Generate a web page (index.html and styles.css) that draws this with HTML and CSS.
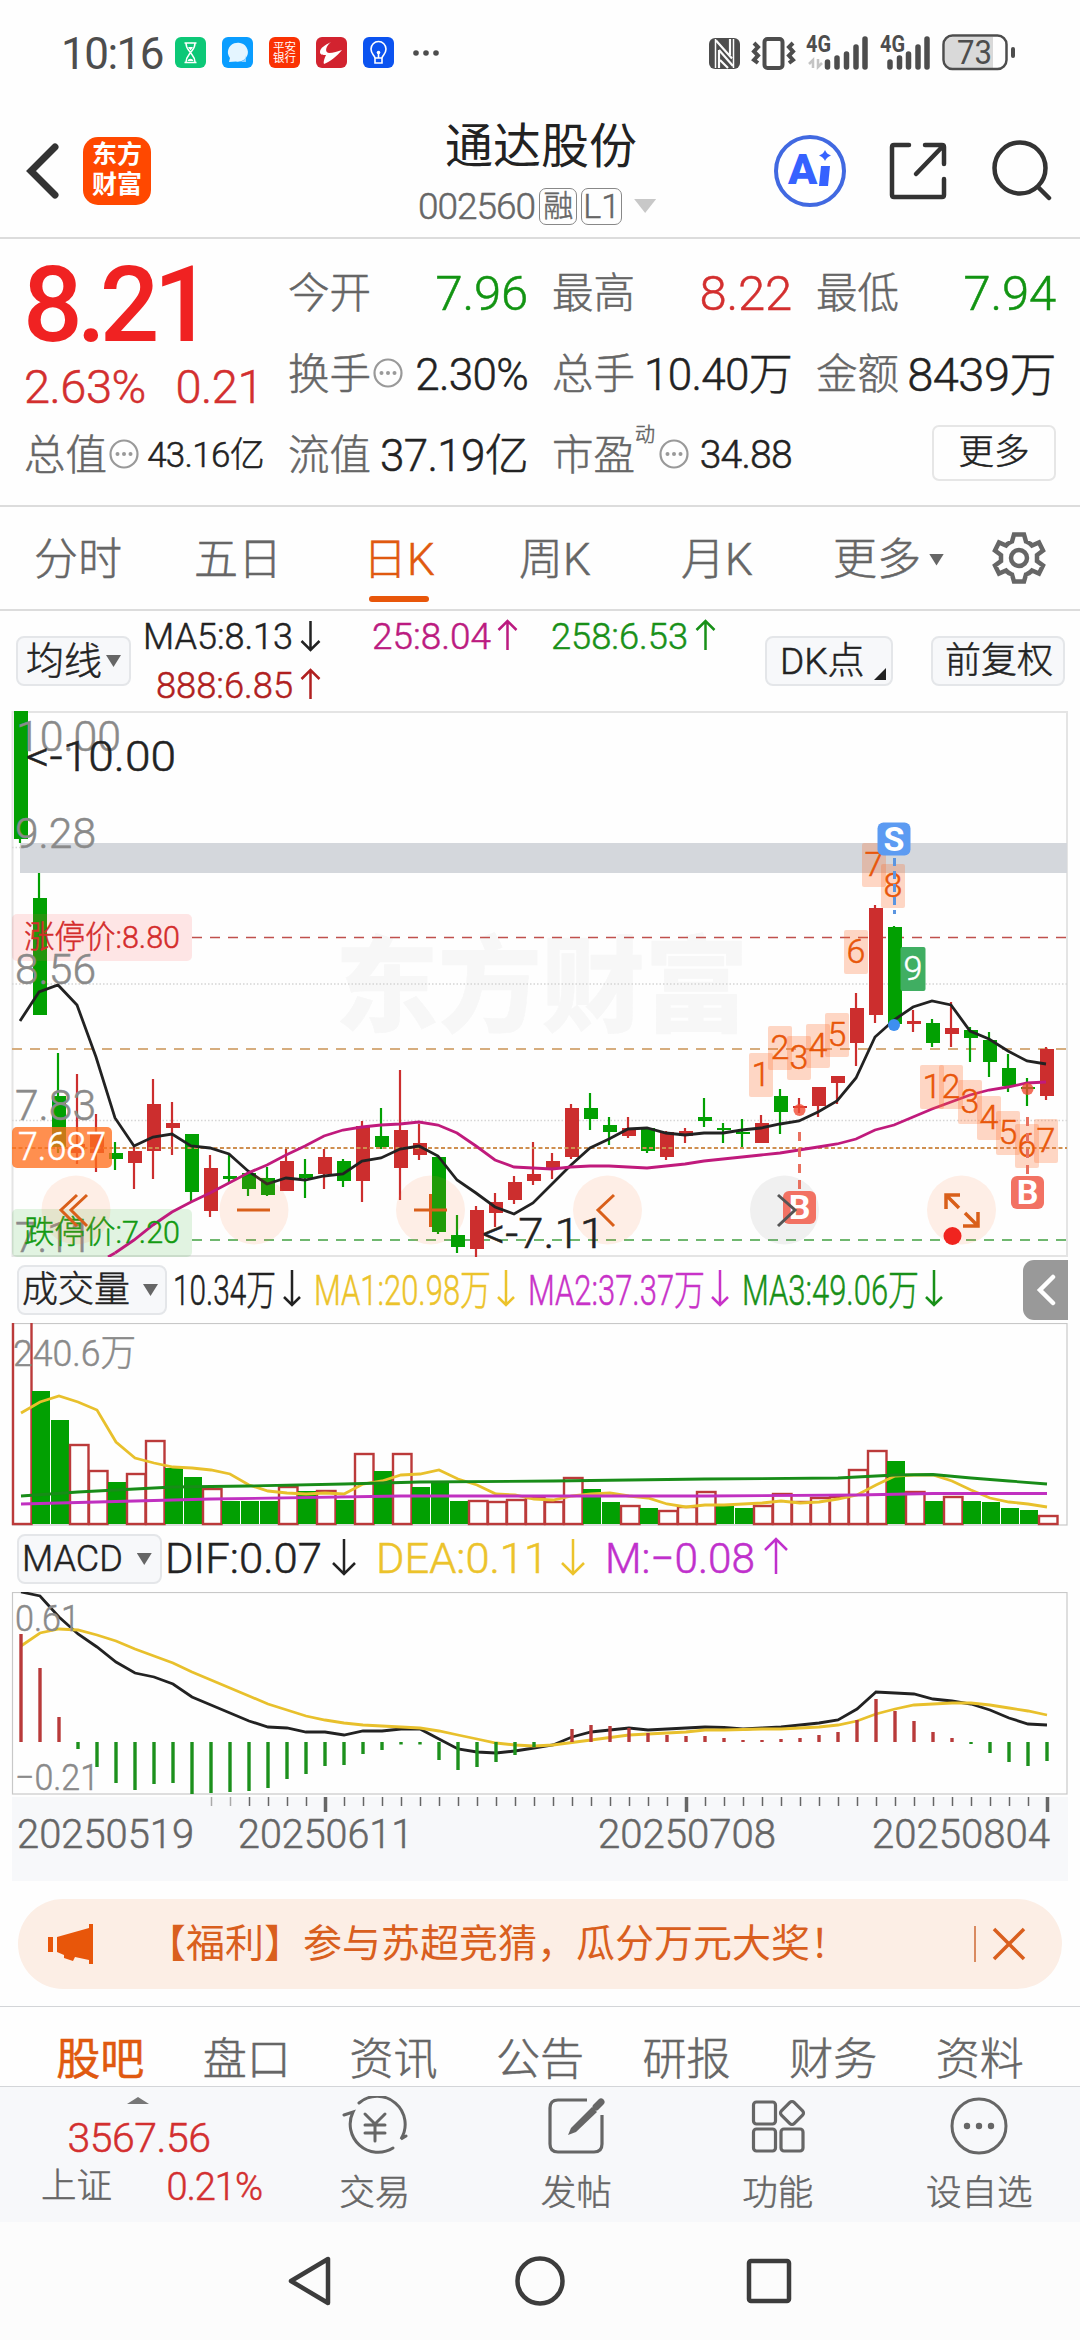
FILE: index.html
```html
<!DOCTYPE html>
<html lang="zh-CN">

<head>
    <meta charset="UTF-8">
    <meta name="viewport" content="width=device-width, initial-scale=1.0">
    <title>通达股份 002560</title>
    <link rel="stylesheet" href="styles.css">
</head>

<body>
    <div class="status-bar">
        <span class="clock">10:16</span>
        <div class="app-icons">
            <svg width="31" height="31" viewBox="0 0 31 31"><rect width="31" height="31" rx="6" fill="#0cc877"/><path d="M9.500 6h12M9.500 25.500h12M11 6c0 6 3 7 4.500 9.500C14 18 11 20 11 25M20 6c0 6-3 7-4.500 9.500C17 18 20 20 20 25" fill="none" stroke="#fff" stroke-width="1.500"/><path d="M15.500 13.500l-2.500-3.500h5zM12.500 24c1-3 5-3 6 0z" fill="#fff"/></svg>
            <svg width="31" height="31" viewBox="0 0 31 31"><rect width="31" height="31" rx="6" fill="#0a9dff"/><path d="M7 25l1-4A10 9.500 0 1 1 14 24.500z" fill="#e4f5ff"/><path d="M17 25a7 7 0 0 0 7-7v7z" fill="#8fd0ff"/></svg>
            <svg width="31" height="31" viewBox="0 0 31 31"><rect width="31" height="31" rx="6" fill="#fa3203"/><g class="tiny-logo" fill="#fff"><text x="4" y="13.500" textLength="23" lengthAdjust="spacingAndGlyphs">平安</text><text x="4" y="24.500" textLength="23" lengthAdjust="spacingAndGlyphs">银行</text></g></svg>
            <svg width="31" height="31" viewBox="0 0 31 31"><rect width="31" height="31" rx="6" fill="#d2232f"/><path d="M15 5c-6 3-11 6-11 10 0 3 3 3 6 3-1 2-3 7-2 9 6-2 13-8 18-14-4 1-9 3-13 3-5-1-3-7 2-11z" fill="#fff"/></svg>
            <svg width="31" height="31" viewBox="0 0 31 31"><rect width="31" height="31" rx="6" fill="#0b53f0"/><path d="M12 21c-.5-3-4-4-4-9a7.500 7.500 0 0 1 15 0c0 5-3.500 6-4 9zM12 21v5h7v-5M15.500 16v5" fill="none" stroke="#fff" stroke-width="1.600"/><circle cx="15.500" cy="15.500" r="1.800" fill="#fff"/></svg>
        </div>
        <svg class="dots" width="26" height="6" viewBox="0 0 26 6" fill="#4d4d4d"><circle cx="3" cy="3" r="2.800"/><circle cx="13" cy="3" r="2.800"/><circle cx="23" cy="3" r="2.800"/></svg>
        <svg class="system-icons" width="310" height="50" viewBox="708 27 310 50">
            <rect x="709" y="37" width="31" height="31" rx="6" fill="#4d4d4d"/>
            <path d="M715.500 38v29M733.500 38v29" stroke="#fcfcfc" stroke-width="1.500"/>
            <path d="M716 39.500l16 18M719 49v18M730 38v16M719 49l14 16M720 59l8 8" stroke="#fcfcfc" stroke-width="2.200" fill="none"/>
            <rect x="764.500" y="38" width="18" height="29" rx="3" fill="none" stroke="#4d4d4d" stroke-width="4"/>
            <path d="M754 42l4 4-4 4.500 4 4-4 4.500 4 3M793 42l-4 4 4 4.500-4 4 4 4.500-4 3" fill="none" stroke="#4d4d4d" stroke-width="4"/>
            <g fill="#4d4d4d" class="net"><text x="806" y="51" textLength="25" lengthAdjust="spacingAndGlyphs">4G</text><text x="880" y="51" textLength="25" lengthAdjust="spacingAndGlyphs">4G</text></g>
            <path d="M813 67v-8l-4 4M818 58v8l4-4" fill="none" stroke="#c4c4c4" stroke-width="2.500"/>
            <path d="M827.500 61v5M837 57v9M846.500 53v13M856 46v20M865 38v28M890 61v5M899.500 57v9M908.500 53v13M918 46v20M927 38v28" stroke="#4d4d4d" stroke-width="5.500" stroke-linecap="round"/>
            <path d="M953 36h40v31h-40q-8 0-8-8v-15q0-8 8-8z" fill="#d9d9d9"/>
            <rect x="943.500" y="34.500" width="63" height="33.500" rx="9" fill="none" stroke="#4d4d4d" stroke-width="2.500"/>
            <path d="M1013 48v7" stroke="#4d4d4d" stroke-width="4" stroke-linecap="round"/>
            <text class="battery" x="957" y="63" textLength="35" lengthAdjust="spacingAndGlyphs" fill="#4d4d4d">73</text>
        </svg>
    </div>

    <div class="header">
        <div class="header-left">
            <svg width="34" height="58" viewBox="0 0 34 58"><path d="M29 5L5 29l24 24" fill="none" stroke="#333" stroke-width="7" stroke-linecap="round"/></svg>
            <div class="brand">东方<br>财富</div>
        </div>
        <div class="title">
            <div class="name">通达股份</div>
            <div class="code"><span>002560</span><i>融</i><i class="wide">L1</i><b class="tri"></b></div>
        </div>
        <div class="header-right">
            <svg width="72" height="72" viewBox="0 0 72 72"><circle cx="36" cy="36" r="34" fill="#fff" stroke="#4169e1" stroke-width="4"/><text class="ai" x="14" y="49" fill="#3662ff">A</text><path d="M47 31h9l-2 20h-9z" fill="#3662ff"/><path d="M51 15q1.500 4 6 5.500-4.500 1.500-6 5.500-1.500-4-6-5.500 4.500-1.500 6-5.500z" fill="#3662ff"/></svg>
            <svg width="60" height="60" viewBox="0 0 60 60"><path d="M21 4H6q-2 0-2 2v48q0 2 2 2h48q2 0 2-2V38M37 4h17q2 0 2 2v17M55 5L28 33" fill="none" stroke="#333" stroke-width="4.500" stroke-linecap="round"/></svg>
            <svg width="62" height="62" viewBox="0 0 62 62"><circle cx="30" cy="28" r="25.500" fill="none" stroke="#333" stroke-width="4.500"/><path d="M48 47l11 11" stroke="#333" stroke-width="4.500" stroke-linecap="round"/></svg>
        </div>
    </div>

    <div class="quote">
        <div class="price">
            <div class="last">8.21</div>
            <div class="change"><span>2.63%</span><span>0.21</span></div>
        </div>
        <div class="cell"><label>今开</label><span class="big green">7.96</span></div>
        <div class="cell"><label>最高</label><span class="big red">8.22</span></div>
        <div class="cell"><label>最低</label><span class="big green">7.94</span></div>
        <div class="cell"><label>换手</label><svg class="tip" viewBox="0 0 30 30"><use href="#tip"/></svg><span>2.30%</span></div>
        <div class="cell"><label>总手</label><span>10.40万</span></div>
        <div class="cell"><label>金额</label><span class="wide">8439万</span></div>
        <div class="cell"><label>总值</label><svg class="tip" viewBox="0 0 30 30"><use href="#tip"/></svg><span class="small">43.16亿</span></div>
        <div class="cell"><label>流值</label><span>37.19亿</span></div>
        <div class="cell"><label>市盈<sup>动</sup></label><svg class="tip" viewBox="0 0 30 30"><use href="#tip"/></svg><span class="mid">34.88</span></div>
        <div class="cell end"><button class="more">更多</button></div>
        <svg width="0" height="0" class="defs"><defs><g id="tip"><circle cx="15" cy="15" r="13.500" fill="none" stroke="#999" stroke-width="2.200"/><circle cx="8.500" cy="15" r="2" fill="#999"/><circle cx="15" cy="15" r="2" fill="#999"/><circle cx="21.500" cy="15" r="2" fill="#999"/></g></defs></svg>
    </div>

    <div class="period-tabs">
        <span>分时</span>
        <span>五日</span>
        <span class="active">日K</span>
        <span>周K</span>
        <span>月K</span>
        <span>更多<b class="tri dark"></b></span>
        <svg width="54" height="54" viewBox="-27 -27 54 54" fill="none" stroke="#666" stroke-width="4.500"><path d="M-5-23.500H5L7-16.500Q11-15 13-12.500L20-15.500 24-7.500 18-3V3L24 7.500 20 15.500 13 12.500Q11 15 7 16.500L5 23.500H-5L-7 16.500Q-11 15-13 12.500L-20 15.500-24 7.500-18 3V-3L-24-7.500-20-15.500-13-12.500Q-11-15-7-16.500Z"/><circle r="8"/></svg>
    </div>

    <div class="ma-row">
        <button class="pill ma">均线<b class="tri dark"></b></button>
        <svg class="ma-legend" width="620" height="100" viewBox="131 611 620 100" id="ma-legend"></svg>
        <button class="pill dk">DK点<b class="corner"></b></button>
        <button class="pill fq">前复权</button>
    </div>

    <svg id="kline" width="1080" height="546" viewBox="0 711 1080 546"></svg>

    <div class="legend-row vol">
        <button class="pill">成交量<b class="tri dark"></b></button>
        <svg id="vol-legend" width="800" height="66" viewBox="167 1257 800 66"></svg>
        <div class="collapse"><svg width="20" height="32" viewBox="0 0 20 32"><path d="M17 3L4 16l13 13" fill="none" stroke="#fff" stroke-width="4.500" stroke-linecap="round"/></svg></div>
    </div>
    <svg id="volume" width="1080" height="203" viewBox="0 1323 1080 203"></svg>

    <div class="legend-row">
        <button class="pill macd">MACD<b class="tri dark"></b></button>
        <svg id="macd-legend" width="800" height="66" viewBox="162 1526 800 66"></svg>
    </div>
    <svg id="macd" width="1080" height="203" viewBox="0 1592 1080 203"></svg>
    <svg id="dates" width="1080" height="86" viewBox="0 1795 1080 86"></svg>

    <div class="banner">
        <svg width="46" height="40" viewBox="0 0 46 40" fill="#e8560a"><path d="M0 13h5v15H0zM9 13L41 4V0h4v40h-4v-4l-14-3-2 4-9-3v-3l-7-3z"/></svg>
        <span>【福利】参与苏超竞猜，瓜分万元大奖！</span>
        <i></i>
        <svg width="34" height="34" viewBox="0 0 34 34"><path d="M2 2l30 30M32 2L2 32" stroke="#d95f1e" stroke-width="3.500"/></svg>
    </div>

    <div class="info-tabs">
        <span class="active">股吧</span><span>盘口</span><span>资讯</span><span>公告</span><span>研报</span><span>财务</span><span>资料</span>
    </div>

    <div class="toolbar">
        <div class="index">
            <b class="up"></b>
            <div class="index-value">3567.56</div>
            <div class="index-name"><span>上证</span><em>0.21%</em></div>
        </div>
        <div class="tool"><svg width="66" height="60" viewBox="-33 -30 66 60" fill="none" stroke="#666" stroke-width="3" stroke-linecap="round"><path d="M-16-23A28 28 0 0 1 26 13l5-3M18 22A28 28 0 0 1-22-14l-9 3"/><path d="M-10-12L0-2 10-12M0-2V15M-10-1H10M-10 7H10"/></svg>交易</div>
        <div class="tool"><svg width="60" height="60" viewBox="-30 -30 60 60" fill="none" stroke="#666" stroke-width="3.200"><path d="M11-26h-29q-8 0-8 8v36q0 8 8 8h36q8 0 8-8v-29"/><path d="M-8 9l3-7L16-19l5 5L0 6z" fill="#666" stroke="none"/><path d="M20-19l5-5" stroke-width="7" stroke-linecap="round"/></svg>发帖</div>
        <div class="tool"><svg width="60" height="60" viewBox="-30 -30 60 60" fill="none" stroke="#666" stroke-width="3.200"><rect x="-24.500" y="-24" width="22" height="22" rx="3"/><rect x="-24.500" y="3" width="22" height="22" rx="3"/><rect x="3" y="3" width="22" height="22" rx="3"/><rect x="5" y="-22" width="18" height="18" rx="3" transform="rotate(45 14 -13)"/></svg>功能</div>
        <div class="tool"><svg width="60" height="60" viewBox="-30 -30 60 60" fill="none" stroke="#666" stroke-width="3"><circle r="27"/><g fill="#666" stroke="none"><circle cx="-12" r="3.200"/><circle r="3.200"/><circle cx="12" r="3.200"/></g></svg>设自选</div>
    </div>

    <div class="nav-bar">
        <svg width="50" height="54" viewBox="0 0 50 54"><path d="M42 5v44L5 27z" fill="none" stroke="#3c3c3c" stroke-width="4.500" stroke-linejoin="round"/></svg>
        <svg width="50" height="54" viewBox="0 0 50 54"><circle cx="25" cy="27" r="22.500" fill="none" stroke="#3c3c3c" stroke-width="4.500"/></svg>
        <svg width="50" height="54" viewBox="0 0 50 54"><rect x="5" y="7" width="40" height="40" rx="2" fill="none" stroke="#3c3c3c" stroke-width="4.500"/></svg>
    </div>

    <script>
        const RED = '#cc2e2e';
        const GREEN = '#02a002';
        const STEP = 19;

        // color, high, body top, body bottom, low
        const candles = [
            ['g', 711, 711, 839, 843], ['g', 873, 898, 1015, 1015], ['g', 1053, 1096, 1147, 1153], ['r', 1074, 1144, 1153, 1164],
            ['r', 1114, 1132, 1153, 1172], ['g', 1142, 1153, 1159, 1170], ['r', 1147, 1151, 1163, 1189], ['r', 1079, 1104, 1151, 1179],
            ['r', 1102, 1123, 1128, 1155], ['g', 1134, 1134, 1192, 1201], ['r', 1155, 1168, 1211, 1217], ['g', 1153, 1176, 1179, 1184],
            ['g', 1173, 1173, 1189, 1196], ['g', 1167, 1178, 1195, 1196], ['r', 1149, 1161, 1191, 1191], ['g', 1159, 1174, 1178, 1198],
            ['r', 1149, 1157, 1174, 1189], ['g', 1159, 1161, 1181, 1187], ['r', 1121, 1126, 1181, 1202], ['g', 1108, 1136, 1147, 1149],
            ['r', 1070, 1130, 1168, 1200], ['r', 1124, 1143, 1155, 1160], ['g', 1157, 1157, 1232, 1234], ['g', 1215, 1235, 1247, 1253],
            ['r', 1206, 1210, 1249, 1257], ['r', 1193, 1202, 1213, 1227], ['r', 1176, 1182, 1200, 1204], ['r', 1142, 1174, 1181, 1185],
            ['r', 1153, 1161, 1168, 1179], ['r', 1104, 1108, 1157, 1159], ['g', 1093, 1108, 1119, 1130], ['g', 1117, 1125, 1132, 1145],
            ['r', 1117, 1128, 1136, 1138], ['g', 1127, 1128, 1151, 1153], ['r', 1131, 1132, 1157, 1160], ['r', 1128, 1131, 1136, 1143],
            ['g', 1098, 1117, 1121, 1127], ['g', 1123, 1128, 1130, 1143], ['g', 1119, 1132, 1134, 1147], ['r', 1115, 1123, 1143, 1143],
            ['g', 1089, 1096, 1112, 1134], ['r', 1098, 1106, 1108, 1113], ['r', 1087, 1087, 1106, 1117], ['r', 1076, 1076, 1083, 1104],
            ['r', 993, 1008, 1043, 1066], ['r', 905, 908, 1015, 1023], ['g', 926, 927, 1024, 1027], ['r', 1010, 1021, 1024, 1032],
            ['g', 1019, 1023, 1043, 1047], ['r', 1002, 1028, 1034, 1047], ['g', 1027, 1030, 1038, 1062], ['g', 1032, 1040, 1062, 1077],
            ['g', 1054, 1068, 1086, 1092], ['g', 1078, 1087, 1089, 1106], ['r', 1047, 1049, 1096, 1100]
        ];
        const ma5 = [1021, 992, 985, 1005, 1057, 1118, 1146, 1137, 1134, 1146, 1148, 1154, 1171, 1184, 1178, 1180, 1176, 1174, 1161, 1158, 1149, 1146, 1156, 1180, 1193, 1207, 1214, 1203, 1184, 1165, 1148, 1139, 1129, 1128, 1133, 1135, 1133, 1133, 1130, 1128, 1124, 1121, 1112, 1101, 1078, 1037, 1020, 1007, 1001, 1005, 1031, 1039, 1051, 1061, 1064];
        // starts at the 6th bar
        const ma25 = [1253, 1240, 1225, 1212, 1202, 1193, 1183, 1173, 1165, 1155, 1146, 1136, 1130, 1127, 1125, 1124, 1122, 1125, 1133, 1146, 1160, 1167, 1168, 1169, 1167, 1166, 1166, 1167, 1168, 1166, 1164, 1161, 1159, 1157, 1155, 1153, 1150, 1147, 1144, 1139, 1130, 1125, 1117, 1109, 1102, 1095, 1090, 1087, 1083, 1082];

        const volTop = [1318, 1391, 1420, 1445, 1471, 1482, 1474, 1441, 1468, 1477, 1489, 1501, 1501, 1501, 1487, 1491, 1491, 1500, 1454, 1471, 1454, 1487, 1482, 1501, 1501, 1502, 1500, 1498, 1502, 1478, 1489, 1502, 1506, 1508, 1511, 1507, 1492, 1506, 1508, 1506, 1494, 1502, 1498, 1497, 1470, 1451, 1461, 1492, 1501, 1497, 1501, 1502, 1508, 1510, 1516];
        const volColor = 'rggrrgrrggrgggrgrgrgrgggrrrrrrggrgrrrggrrrrrrrgrgrggggr';
        const volMa1 = [1413, 1402, 1396, 1402, 1410, 1442, 1458, 1463, 1467, 1468, 1470, 1474, 1485, 1491, 1493, 1494, 1493, 1494, 1484, 1481, 1475, 1474, 1470, 1479, 1485, 1494, 1495, 1499, 1500, 1496, 1494, 1493, 1496, 1498, 1504, 1507, 1505, 1505, 1504, 1503, 1501, 1503, 1502, 1499, 1495, 1485, 1476, 1475, 1475, 1481, 1490, 1498, 1502, 1504, 1507];
        const volMa2 = [[0, 1504], [6, 1501], [10, 1499], [20, 1496], [36, 1496], [44, 1495], [48, 1493.5], [54, 1493.5]];
        const volMa3 = [[0, 1496], [3, 1492], [8, 1487], [12, 1486], [17, 1484], [21, 1482], [28, 1481], [36, 1479], [43, 1478], [46, 1475], [48, 1474.5], [50, 1478], [52, 1481], [54, 1484]];

        const hist = [1634, 1668, 1717, 1749, 1767, 1783, 1790, 1784, 1783, 1794, 1793, 1792, 1791, 1788, 1779, 1774, 1766, 1765, 1754, 1750, 1744.5, 1744.5, 1760, 1770, 1767, 1762, 1755, 1747, 1742, 1729, 1725, 1726, 1728, 1733, 1735, 1736, 1736, 1738, 1740, 1740, 1739, 1738, 1735, 1732, 1720, 1699, 1711, 1721, 1732, 1738, 1744, 1753, 1762, 1766, 1761];
        const dif = [1592, 1596, 1617, 1634, 1647, 1662, 1673, 1677, 1684, 1697, 1705, 1713, 1721, 1727, 1728, 1732, 1732, 1735, 1731, 1731, 1729, 1729, 1739, 1749, 1752, 1753, 1751, 1748, 1745, 1737, 1732, 1730, 1728, 1730, 1729, 1728, 1727, 1727.5, 1729, 1728, 1727, 1725, 1723, 1720, 1709, 1692, 1693, 1694, 1699, 1701, 1704, 1710, 1718, 1724, 1725];
        const dea = [1646, 1633, 1629, 1630, 1635, 1641, 1649, 1656, 1663, 1672, 1680, 1688, 1696, 1704, 1710, 1716, 1720, 1723, 1725, 1726, 1727, 1728, 1731, 1735, 1739, 1743, 1745, 1746, 1745, 1742.5, 1740, 1737.5, 1735, 1734, 1733, 1732, 1730, 1730, 1729.5, 1729, 1729, 1728, 1727, 1725, 1721, 1714, 1709, 1705, 1704, 1703, 1703, 1705, 1708, 1711, 1715];

        function rect(x, y, w, h, fill, rest = '') {
            return `<rect x="${x}" y="${y}" width="${w}" height="${h}" fill="${fill}" ${rest}/>`;
        }

        function line(x1, y1, x2, y2, color, width = 2, dash = '') {
            return `<line x1="${x1}" y1="${y1}" x2="${x2}" y2="${y2}" stroke="${color}" stroke-width="${width}" stroke-dasharray="${dash}"/>`;
        }

        // text stretched to run from x to x2
        function text(str, x, x2, y, size, color, cls = '') {
            return `<text x="${x}" y="${y}" font-size="${size}" textLength="${x2 - x}" lengthAdjust="spacingAndGlyphs" fill="${color}" stroke="${color}" stroke-width="0.5" class="${cls}">${str}</text>`;
        }

        function arrow(x, top, bottom, up, color, wing = 9) {
            const tip = up ? top : bottom;
            const dy = up ? wing : -wing;
            return `<path d="M${x} ${top}V${bottom}M${x - wing} ${tip + dy}L${x} ${tip}L${x + wing} ${tip + dy}" fill="none" stroke="${color}" stroke-width="2.5"/>`;
        }

        function curve(points, x0, color, from = 0) {
            const pts = points.map((p, i) => Array.isArray(p) ? `${x0 + p[0] * STEP},${p[1]}` : `${x0 + (i + from) * STEP},${p}`);
            return `<polyline points="${pts.join(' ')}" fill="none" stroke="${color}" stroke-width="2.8"/>`;
        }

        function drawKline() {
            let s = '';
            s += text('东方财富', 335, 748, 1024, 104, '#f7f7f7', 'heavy');
            s += `<path d="M12.500 712H1067V1256H12.500Z" fill="none" stroke="#e4e4e4" stroke-width="2"/>`;
            [847.5, 984, 1120.5].forEach(y => s += line(12, y, 1067, y, '#d5d5d5', 1.5, '1.5 2'));
            s += line(192, 937.5, 1067, 937.5, '#c0504d', 1.6, '10 8');
            s += line(12, 1049, 1067, 1049, '#d6ad7e', 1.8, '10 8');
            s += line(192, 1240, 1067, 1240, '#6fb76f', 1.8, '10 8');
            candles.forEach(([c, high, top, bottom, low], i) => {
                const x = 20 + i * STEP;
                const color = c === 'r' ? RED : GREEN;
                s += line(x, high, x, low, color, 2.2);
                s += rect(x - 6, top, 14, bottom - top, color);
            });
            s += rect(20, 843, 1047, 30, '#d4d7dc');
            s += line(12, 1148, 1067, 1148, '#cf8f50', 1.8, '4 2.5');
            s += text('10.00', 16, 121, 751, 42, '#8a8a8a');
            s += text('9.28', 15, 96, 848, 42, '#8a8a8a');
            s += rect(12, 914, 180, 47, '#ff5050', 'fill-opacity="0.14" rx="5"');
            s += rect(12, 1209, 180, 48, '#30b030', 'fill-opacity="0.14" rx="5"');
            s += curve(ma5, 20, '#222');
            s += `<path d="M108 1257L115 1253" stroke="#c01a7c" stroke-width="2.8"/>` + curve(ma25, 20, '#c01a7c', 5);
            s += text('8.56', 15, 96, 984, 42, '#8a8a8a');
            s += text('7.83', 15, 96, 1120, 42, '#8a8a8a');
            s += text('7.11', 15, 92, 1252, 42, '#8a8a8a');
            s += text('涨停价:8.80', 24, 180, 948, 32, '#d42c2c');
            s += text('跌停价:7.20', 24, 180, 1243, 32, '#129a12');
            s += rect(12, 1127, 100, 41, '#ff6f1e', 'fill-opacity="0.78" rx="5"');
            s += text('7.687', 18, 106, 1160, 38, '#fff');

            [76, 254, 430.5, 607.5, 784.5, 961.5].forEach((x, i) => {
                s += `<circle cx="${x}" cy="1210" r="34.500" fill="${i === 4 ? '#888' : '#ff7d3c'}" fill-opacity="0.12"/>`;
            });
            s += `<g fill="none" stroke="#d95f1a" stroke-width="3">
                <path d="M77 1195L61 1210L77 1226M87 1195L71 1210L87 1226M237 1210H270M414 1210H447M430.500 1194V1227M614 1195L598 1210L614 1226"/>
                <path d="M946 1209V1195H960M946 1195L959 1208M978 1212V1226H963M978 1226L965 1213" stroke-width="3.500"/></g>`;
            s += `<circle cx="952.500" cy="1236" r="9" fill="#f0241f"/>`;
            s += text('&lt;-10.00', 26, 176, 771, 42, '#222');
            s += text('&lt;-7.11', 482, 605, 1248, 42, '#222');

            // nine-turn counts
            const counts = [[1, 749, 1053], [2, 768, 1026], [3, 787, 1036], [4, 806, 1024], [5, 825, 1013], [6, 844, 930], [7, 862, 843], [8, 881, 864],
                [1, 920, 1065], [2, 939, 1065], [3, 958, 1080], [4, 977, 1096], [5, 996, 1111], [6, 1015, 1124], [7, 1034, 1119]];
            counts.forEach(([n, x, y]) => {
                s += rect(x, y, 24, 44, '#ff6a28', 'fill-opacity="0.27" rx="2"');
                s += `<text x="${x + 12}" y="${y + 33}" font-size="34" text-anchor="middle" fill="#e8560a" stroke="#e8560a" stroke-width="0.5">${n}</text>`;
            });
            s += rect(900.5, 947, 25, 44, '#40ae62', 'rx="2"') + `<text x="913" y="980" font-size="34" text-anchor="middle" fill="#fff" stroke="#fff" stroke-width="0.5">9</text>`;

            // buy and sell points
            s += line(894.5, 858, 894.5, 914, '#5b95e0', 3, '8 5');
            s += rect(877.5, 822.5, 33, 33, '#5c9bf2', 'rx="6"') + `<text x="894" y="851" class="mark" text-anchor="middle">S</text>`;
            s += `<circle cx="894" cy="1025" r="6" fill="#3d8ff0"/>`;
            [[799.5, 1110, 1132, 1191], [1027.5, 1089, 1117, 1176]].forEach(([x, dot, top, box]) => {
                s += `<circle cx="${x}" cy="${dot}" r="6" fill="#f04a32" fill-opacity="0.8"/>`;
                s += line(x, top, x, box, '#e8705f', 3, '9 7');
                s += rect(x - 16.5, box, 33, 33, '#f27263', 'rx="6"') + `<text x="${x}" y="${box + 28}" class="mark" text-anchor="middle">B</text>`;
            });
            s += `<path d="M778 1195L795 1210L778 1226" fill="none" stroke="#555" stroke-width="3"/>`;
            document.getElementById('kline').innerHTML = s;
        }

        function drawVolume() {
            let s = `<rect x="12.500" y="1323.500" width="1054.500" height="201.500" fill="none" stroke="#c8c8c8" stroke-width="1.200"/>`;
            volTop.forEach((y, i) => {
                const x = 12 + i * STEP;
                if (volColor[i] === 'r') {
                    s += rect(x + 1, y, 18.5, 1524 - y, 'none', 'stroke="#bb3a3a" stroke-width="2.4"');
                } else {
                    s += rect(x + 1, y, 18, 1524 - y, GREEN);
                }
            });
            s += curve(volMa1, 21, '#e8c02c') + curve(volMa3, 21, '#188c18') + curve(volMa2, 21, '#c030c0');
            s += text('240.6万', 13, 136, 1366, 37, '#8a8a8a');
            document.getElementById('volume').innerHTML = s;
        }

        function drawMacd() {
            let s = `<rect x="12.500" y="1592.500" width="1054.500" height="201.500" fill="none" stroke="#c8c8c8" stroke-width="1.200"/>`;
            s += curve(dif, 21, '#222') + curve(dea, 21, '#e8c02c');
            hist.forEach((y, i) => {
                s += line(21 + i * STEP, 1742, 21 + i * STEP, y, y < 1742 ? '#b83a3a' : '#1c901c', 3.4);
            });
            s += text('0.61', 15, 80, 1631, 37, '#8a8a8a');
            s += text('−0.21', 15, 99, 1790, 37, '#8a8a8a');
            document.getElementById('macd').innerHTML = s;

            let d = rect(12, 1797, 1056, 84, '#f7f8fa');
            for (let i = 10; i < 55; i++) {
                const big = i === 16 || i === 35 || i === 54;
                d += line(21.5 + i * STEP, 1797, 21.5 + i * STEP, big ? 1812 : 1806, i < 12 ? '#aaa' : '#666', big ? 3.5 : 1.5);
            }
            [['20250519', 17, 194], ['20250611', 238, 413], ['20250708', 598, 776], ['20250804', 872, 1050]].forEach(([t, a, b]) => {
                d += text(t, a, b, 1848, 40, '#666');
            });
            document.getElementById('dates').innerHTML = d;
        }

        function drawLegends() {
            document.getElementById('ma-legend').innerHTML =
                text('MA5:8.13', 143, 293, 649, 36, '#222') + arrow(310.5, 621, 650, false, '#222') +
                text('25:8.04', 372, 491, 649, 36, '#bb1a80') + arrow(507.5, 621, 650, true, '#bb1a80') +
                text('258:6.53', 551, 688, 649, 36, '#189018') + arrow(705.5, 621, 650, true, '#189018') +
                text('888:6.85', 156, 293, 698, 36, '#b02020') + arrow(310.5, 670, 699, true, '#b02020');

            document.getElementById('vol-legend').innerHTML =
                text('10.34万', 173, 276, 1305, 42, '#222') + arrow(292, 1270, 1305, false, '#222', 8) +
                text('MA1:20.98万', 314, 491, 1305, 42, '#ecc32b') + arrow(506, 1270, 1305, false, '#ecc32b', 8) +
                text('MA2:37.37万', 528, 705, 1305, 42, '#c832c8') + arrow(720, 1270, 1305, false, '#c832c8', 8) +
                text('MA3:49.06万', 742, 919, 1305, 42, '#189018') + arrow(934, 1270, 1305, false, '#189018', 8);

            document.getElementById('macd-legend').innerHTML =
                text('DIF:0.07', 165, 322, 1573, 42, '#222') + arrow(344, 1539, 1574, false, '#222', 11) +
                text('DEA:0.11', 376, 548, 1573, 42, '#ecc32b') + arrow(573, 1539, 1574, false, '#ecc32b', 11) +
                text('M:−0.08', 605, 755, 1573, 42, '#c030cc') + arrow(776, 1539, 1574, true, '#c030cc', 11);
        }

        drawKline();
        drawVolume();
        drawMacd();
        drawLegends();
    </script>
</body>

</html>
```
FILE: styles.css
```css
* {
    box-sizing: border-box;
}

body {
    margin: 0;
    width: 1080px;
    height: 2340px;
    overflow: hidden;
    background: #fefefe;
    color: #222;
    font-family: Roboto, "Noto Sans CJK SC", sans-serif;
    font-weight: 300;
}

svg {
    display: block;
    flex: none;
}

button {
    font-family: inherit;
    font-weight: inherit;
    color: #222;
    padding: 0;
}

i,
em {
    font-style: normal;
}

/* a little more body for the light face */
.code,
.change,
.cell,
.period-tabs,
.pill,
.info-tabs,
.toolbar {
    -webkit-text-stroke: 0.500px currentColor;
}

.red {
    color: #d32f2f;
}

.green {
    color: #129412;
}

.tri {
    width: 22px;
    height: 14px;
    background: #c8c8c8;
    clip-path: polygon(0 0, 100% 0, 50% 100%);
}

.tri.dark {
    width: 15px;
    height: 12px;
    background: #666;
}

/* status bar */
.status-bar {
    display: flex;
    align-items: center;
    height: 105px;
    padding: 0 62px 0 61px;
    color: #4d4d4d;
}

.clock {
    width: 114px;
    font-size: 44px;
    font-weight: 400;
    letter-spacing: -1.500px;
    margin-top: 3px;
}

.app-icons {
    display: flex;
    gap: 16px;
}

.dots {
    margin-left: 19px;
}

.system-icons {
    margin-left: auto;
}

.tiny-logo {
    font-size: 11px;
    font-weight: 400;
}

.net {
    font-size: 23px;
    font-weight: 700;
}

.battery {
    font-size: 34px;
    font-weight: 400;
}

/* header */
.header {
    display: flex;
    justify-content: space-between;
    height: 134px;
    padding: 0 28px 0 26px;
    border-bottom: 2px solid #dcdcdc;
}

.header-left {
    display: flex;
    align-items: center;
    gap: 23px;
    width: 282px;
}

.brand {
    width: 68px;
    height: 68px;
    padding-top: 3px;
    border-radius: 15px;
    background: #ff4800;
    color: #fff;
    font-size: 25px;
    font-weight: 700;
    line-height: 30px;
    text-align: center;
}

.title {
    width: 300px;
    text-align: center;
}

.name {
    height: 70px;
    font-size: 48px;
    font-weight: 400;
    line-height: 83px;
}

.code {
    display: flex;
    align-items: center;
    gap: 4px;
    width: 260px;
    padding-left: 27px;
    height: 62px;
    color: #666;
    font-size: 37px;
}

.code span {
    width: 121px;
    letter-spacing: -1px;
}

.code i {
    flex: none;
    width: 38px;
    height: 37px;
    border: 1.500px solid #888;
    border-radius: 7px;
    font-size: 30px;
    line-height: 34px;
    text-align: center;
}

.code .wide {
    width: 41px;
    font-size: 34px;
}

.code .tri {
    flex: none;
    margin-left: 8px;
}

.header-right {
    display: flex;
    align-items: center;
    gap: 42px;
}

.ai {
    font-size: 43px;
    font-weight: 900;
}

/* quote */
.quote {
    display: grid;
    grid-template-columns: repeat(4, 1fr);
    grid-template-rows: repeat(3, 81px);
    column-gap: 26px;
    height: 268px;
    padding: 13px 24px 0 26px;
    border-bottom: 2px solid #dcdcdc;
}

.price {
    grid-row: span 2;
}

.last {
    height: 105px;
    color: #f02222;
    font-size: 105px;
    font-weight: 500;
    line-height: 108px;
    letter-spacing: -6px;
    margin-left: -3px;
}

.change {
    display: flex;
    justify-content: space-between;
    width: 239px;
    color: #d32f2f;
    font-size: 47px;
    line-height: 60px;
    letter-spacing: -0.500px;
    margin-left: -2px;
}

.cell {
    display: flex;
    align-items: center;
    padding-top: 2px;
    font-size: 44px;
    line-height: 1;
    letter-spacing: -0.700px;
    white-space: nowrap;
}

.cell label {
    position: relative;
    margin-left: -2px;
    color: #666;
    font-size: 41.500px;
    letter-spacing: 0;
}

.cell sup {
    position: absolute;
    left: 83px;
    top: -10px;
    font-size: 20px;
    line-height: 20px;
}

.cell span {
    margin-left: auto;
}

.cell .big {
    font-size: 49px;
    letter-spacing: -0.200px;
}

.cell .wide {
    font-size: 47px;
    letter-spacing: -0.500px;
}

.cell .mid {
    font-size: 39px;
}

.cell .small {
    font-size: 35px;
}

.tip {
    width: 30px;
    height: 30px;
    margin-left: 2px;
    margin-top: -4px;
}

label:has(sup) + .tip {
    margin-left: 24px;
}

.end {
    justify-content: flex-end;
    padding: 0 0 3px;
}

.more {
    width: 124px;
    height: 56px;
    border: 2px solid #e6e6e6;
    border-radius: 7px;
    background: #fefefe;
    font-size: 35.500px;
    line-height: 1;
}

.defs {
    position: absolute;
}

/* period tabs */
.period-tabs {
    display: grid;
    grid-template-columns: 160px 169px 156px 162px 152px 159px 54px;
    align-items: center;
    height: 104px;
    padding-left: 34px;
    border-bottom: 2px solid #dcdcdc;
    color: #666;
    font-size: 44px;
    line-height: 1;
}

.period-tabs span {
    display: flex;
    align-items: center;
    gap: 8px;
    height: 100%;
    padding-top: 3px;
}

.period-tabs .active {
    position: relative;
    color: #e0590f;
}

.period-tabs .active::after {
    content: "";
    position: absolute;
    left: 6px;
    bottom: 7px;
    width: 60px;
    height: 6px;
    border-radius: 3px;
    background: #e8560a;
}

/* indicator rows */
.pill {
    display: flex;
    align-items: center;
    flex: none;
    height: 50px;
    border: 2px solid #e4e6e9;
    border-radius: 8px;
    background: #f7f8fa;
    font-size: 36px;
    line-height: 1;
}

.ma-row {
    display: flex;
    align-items: center;
    height: 100px;
    padding-left: 16px;
}

.pill.ma {
    width: 115px;
    gap: 4px;
    padding-left: 8px;
    font-size: 38px;
}

.pill.dk {
    position: relative;
    width: 128px;
    margin-left: 14px;
    padding-left: 13px;
    font-size: 37px;
}

.corner {
    position: absolute;
    right: 5px;
    bottom: 4px;
    width: 12px;
    height: 12px;
    background: #222;
    clip-path: polygon(100% 0, 100% 100%, 0 100%);
}

.pill.fq {
    width: 134px;
    margin-left: 38px;
    padding-left: 12px;
}

.legend-row {
    display: flex;
    align-items: center;
    height: 66px;
    padding-left: 17px;
}

.legend-row .pill {
    width: 150px;
    gap: 13px;
    padding-left: 3px;
}

.legend-row .macd {
    width: 145px;
    gap: 14px;
}

.collapse {
    display: flex;
    align-items: center;
    justify-content: center;
    width: 45px;
    height: 60px;
    margin-left: 56px;
    border-radius: 11px 0 0 11px;
    background: #999;
}

/* texts inside the charts */
.heavy {
    font-weight: 900;
}

.mark {
    font-size: 34px;
    font-weight: 700;
    fill: #fff;
}

/* banner */
.banner {
    display: flex;
    align-items: center;
    height: 90px;
    margin: 18px 18px 17px;
    padding-left: 30px;
    border-radius: 45px;
    background: #fceee5;
    color: #d95f1e;
    font-size: 39px;
    font-weight: 400;
    line-height: 1;
}

.banner span {
    width: 880px;
    padding-left: 53px;
    white-space: nowrap;
}

.banner i {
    width: 1.500px;
    height: 36px;
    margin-right: 16px;
    background: #d98a60;
}

/* bottom tabs */
.info-tabs {
    display: flex;
    height: 80px;
    padding: 12px 27px 0;
    border-top: 1px solid #d3d5d8;
    color: #666;
    font-size: 44px;
    line-height: 83px;
    overflow: hidden;
}

.info-tabs span {
    flex: 1;
    text-align: center;
}

.info-tabs .active {
    color: #e0590f;
    font-weight: 400;
}

.toolbar {
    display: flex;
    height: 136px;
    border-top: 1px solid #d3d5d8;
    background: #f7f8fa;
    color: #666;
    font-size: 35.500px;
}

.index {
    width: 274px;
}

.up {
    display: block;
    width: 22px;
    height: 7px;
    margin: 10px 0 0 127px;
    background: #777;
    clip-path: polygon(50% 0, 100% 100%, 0 100%);
}

.index-value {
    margin-top: 8px;
    padding-left: 4px;
    text-align: center;
    color: #d32f2f;
    font-size: 41px;
    letter-spacing: -0.500px;
    line-height: 52px;
}

.index-name {
    display: flex;
    justify-content: space-between;
    padding: 0 12px 0 41px;
    line-height: 45px;
}

.index-name em {
    color: #d32f2f;
    font-size: 38px;
    line-height: 46px;
    letter-spacing: -1px;
}

.tool {
    display: flex;
    flex-direction: column;
    align-items: center;
    width: 201.500px;
    padding-top: 9px;
    line-height: 75px;
}

/* system navigation */
.nav-bar {
    display: flex;
    justify-content: center;
    align-items: center;
    gap: 179px;
    height: 118px;
    background: #fcfcfc;
}
```
